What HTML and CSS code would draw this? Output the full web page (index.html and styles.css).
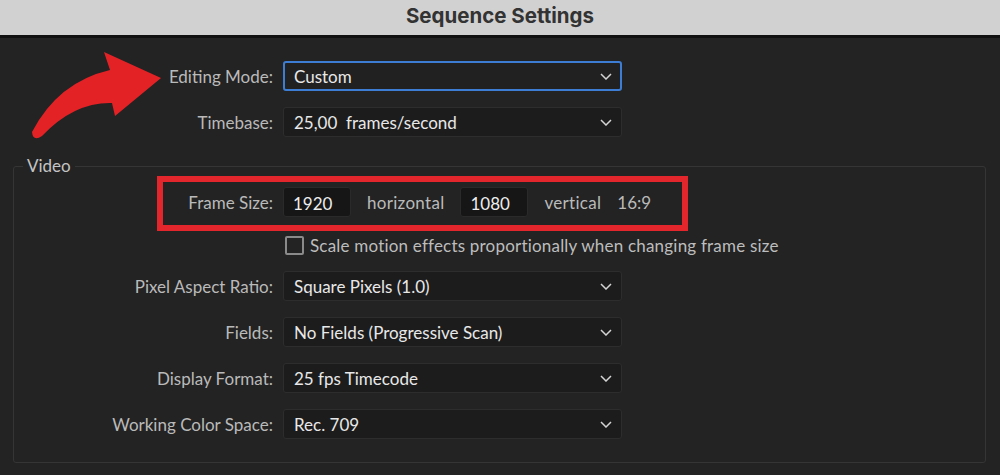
FILE: index.html
```html
<!DOCTYPE html>
<html lang="en">
<head>
  <meta charset="UTF-8" />
  <title>Sequence Settings</title>
  <link rel="stylesheet" href="styles.css">
</head>
<body>
  <div class="titlebar">Sequence Settings</div>

  <div class="dialog">
    <!-- Callout arrow pointing at the editing mode -->
    <svg class="callout-arrow" viewBox="0 38 200 150" width="200" height="150">
      <path d="M110 70 L104 52 L161 78 L115 116 L112 103 Q74 102 42 136 Q33 142 32 132 Q58 82 110 70 Z" fill="#e32226"/>
    </svg>

    <div class="row top-row">
      <label class="label">Editing Mode:</label>
      <div class="select focused">
        <span>Custom</span>
        <svg class="chevron" viewBox="0 0 12 7"><polyline points="1,1 6,6 11,1"/></svg>
      </div>
    </div>
    <div class="row top-row">
      <label class="label">Timebase:</label>
      <div class="select">
        <span>25,00&nbsp; frames/second</span>
        <svg class="chevron" viewBox="0 0 12 7"><polyline points="1,1 6,6 11,1"/></svg>
      </div>
    </div>

    <fieldset class="group">
      <legend>Video</legend>

      <div class="row frame-row">
        <label class="label">Frame Size:</label>
        <div class="frame-fields">
          <input class="num" value="1920">
          <span class="unit unit-h">horizontal</span>
          <input class="num" value="1080">
          <span class="unit">vertical</span>
          <span class="ratio">16:9</span>
        </div>
      </div>

      <div class="row check-row">
        <span></span>
        <label class="check">
          <span class="box"></span>
          <span>Scale motion effects proportionally when changing frame size</span>
        </label>
      </div>

      <div class="row">
        <label class="label">Pixel Aspect Ratio:</label>
        <div class="select">
          <span>Square Pixels (1.0)</span>
          <svg class="chevron" viewBox="0 0 12 7"><polyline points="1,1 6,6 11,1"/></svg>
        </div>
      </div>
      <div class="row">
        <label class="label">Fields:</label>
        <div class="select">
          <span>No Fields (Progressive Scan)</span>
          <svg class="chevron" viewBox="0 0 12 7"><polyline points="1,1 6,6 11,1"/></svg>
        </div>
      </div>
      <div class="row">
        <label class="label">Display Format:</label>
        <div class="select">
          <span>25 fps Timecode</span>
          <svg class="chevron" viewBox="0 0 12 7"><polyline points="1,1 6,6 11,1"/></svg>
        </div>
      </div>
      <div class="row">
        <label class="label">Working Color Space:</label>
        <div class="select">
          <span>Rec. 709</span>
          <svg class="chevron" viewBox="0 0 12 7"><polyline points="1,1 6,6 11,1"/></svg>
        </div>
      </div>
    </fieldset>
  </div>
</body>
</html>
```

FILE: styles.css
```css
body {
  margin: 0;
  background-color: #232323;
  font-family: 'Lato', 'Liberation Sans', sans-serif;
  font-size: 17px;
  color: #bdbdbd;
  height: 475px;
  overflow: hidden;
}

/* Window title */
.titlebar {
  height: 35px;
  line-height: 31px;
  background-color: #d1d1d1;
  border-bottom: 3px solid #111;
  text-align: center;
  font-family: 'Inter', 'Liberation Sans', sans-serif;
  font-weight: 700;
  font-size: 20.5px;
  color: #333;
}

.dialog {
  position: relative;
  padding-top: 23px;
}

.callout-arrow {
  position: absolute;
  top: 0;
  left: 0;
}

/* Label / control rows */
.row {
  display: grid;
  grid-template-columns: 273px 339px;
  column-gap: 10px;
  align-items: center;
  margin-bottom: 16px;
}

.label {
  text-align: right;
  color: #bababa;
}

.select {
  height: 30px;
  box-sizing: border-box;
  display: flex;
  align-items: center;
  justify-content: space-between;
  padding: 0 9px 0 10px;
  background-color: #1c1c1c;
  border: 1px solid #2d2d2d;
  border-radius: 3px;
  color: #e8e8e8;
}

.select.focused {
  border: 2px solid #3d7ed4;
  padding-left: 9px;
  padding-right: 8px;
  background-color: #212121;
}

.chevron {
  width: 12px;
  height: 7px;
  fill: none;
  stroke: #d4d4d4;
  stroke-width: 1.5;
}

/* Video group */
.group {
  margin: 19px 14px 0 13px;
  padding: 11px 0 7px 0;
  border: 1px solid #353535;
  border-radius: 3px;
}

.group legend {
  margin-left: 9px;
  padding: 0 4px;
  line-height: 20px;
  color: #c4c4c4;
}

.group .row {
  grid-template-columns: 259px 339px;
}

/* Frame size, with the red highlight around it */
.frame-row {
  position: relative;
  margin-bottom: 18px;
}

.frame-row::after {
  content: '';
  position: absolute;
  left: 143px;
  top: -11px;
  width: 531px;
  height: 55px;
  box-sizing: border-box;
  border: 6px solid #e3262b;
}

.frame-fields {
  display: flex;
  align-items: center;
  white-space: nowrap;
}

.num {
  width: 68px;
  height: 30px;
  box-sizing: border-box;
  padding: 3px 0 0 9px;
  background-color: #161616;
  border: 1px solid #2a2a2a;
  border-radius: 3px;
  font: inherit;
  color: #ededed;
}

.unit {
  margin: 0 16px;
  color: #bababa;
  letter-spacing: 0.3px;
}

.unit-h {
  margin-right: 16px;
}

.ratio {
  color: #bababa;
}

.check-row {
  margin-bottom: 15px;
}

.check {
  display: flex;
  align-items: center;
  gap: 6px;
  white-space: nowrap;
  color: #bdbdbd;
  margin-left: 2px;
  letter-spacing: 0.2px;
}

.check .box {
  flex-shrink: 0;
  width: 15px;
  height: 15px;
  border: 2px solid #8a8a8a;
  border-radius: 2px;
}
```
